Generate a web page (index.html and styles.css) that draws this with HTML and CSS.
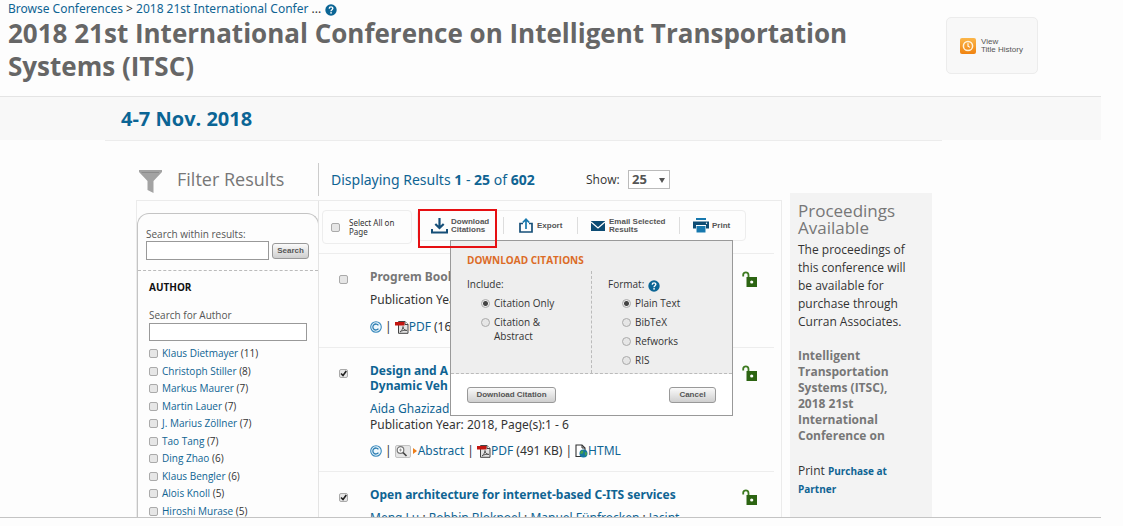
FILE: index.html
```html
<!DOCTYPE html>
<html lang="en">
<head>
<meta charset="utf-8">
<title>2018 21st International Conference on Intelligent Transportation Systems (ITSC)</title>
<link rel="stylesheet" href="styles.css">
</head>
<body>
<svg class="defs" aria-hidden="true">
  <symbol id="help" viewBox="0 0 12 12"><circle cx="6" cy="6" r="5.7" fill="#0b6595"/><path d="M4.2 4.6C4.3 2.2 7.9 2.3 7.8 4.5C7.7 5.7 6.1 5.7 6 7.2" fill="none" stroke="#fff" stroke-width="1.4"/><rect x="5.3" y="8.1" width="1.5" height="1.5" fill="#fff"/></symbol>
  <symbol id="copy" viewBox="0 0 12 12"><circle cx="6" cy="6" r="5.3" fill="#eef7fc" stroke="#3a8abd" stroke-width="1.1"/><path d="M8.4 4.4A3 3 0 1 0 8.4 7.6" fill="none" stroke="#2b7db2" stroke-width="1.3"/></symbol>
  <symbol id="pdf" viewBox="0 0 14 14"><path d="M3.500 1.500H10L13 4.500V13.300H3.500Z" fill="#e4e4e4" stroke="#444"/><path d="M10 1.500V4.500H13" fill="#fff" stroke="#444"/><path d="M5 12C7 10 8 8.500 8 6.500C8 9 9.500 10 12 10.500C9 10 7 10.500 5 12" fill="none" stroke="#555"/><rect y="2" width="9.500" height="3.500" fill="#c3150f"/></symbol>
  <symbol id="glass" viewBox="0 0 16 13"><rect x=".5" y=".5" width="15" height="12" rx="1.500" fill="#e6e6e6" stroke="#c2c2c2"/><circle cx="5.500" cy="5" r="3.300" fill="#fff" stroke="#777" stroke-width="1.200"/><path d="M5.500 3.500V6.500M4 5H7" stroke="#888" stroke-width=".8"/><path d="M8 7.500L11.500 11" stroke="#444" stroke-width="1.700"/></symbol>
  <symbol id="html" viewBox="0 0 13 14"><path d="M1 1H7L10 4V12.500H1Z" fill="#fff" stroke="#333" stroke-width="1.100"/><path d="M7 1V4H10" fill="none" stroke="#333"/><circle cx="8.500" cy="9.500" r="4" fill="#1775a0"/><path d="M6 7C8 5.500 9 7 8 9C7 10 6 10 5 9.500ZM10 8C12 8 12.500 9.500 11 12C10 11 9.500 10 10 8" fill="#48a44c"/></symbol>
  <symbol id="lock" viewBox="0 0 15 16"><path d="M1.200 5.500V3.800C1.200 .6 6.500 .4 6.500 4V6.500" fill="none" stroke="#3d7a20" stroke-width="1.800"/><path d="M4.500 6H15V16H4.500Z" fill="#2c6412"/><circle cx="9.700" cy="11" r="1.600" fill="#fff"/></symbol>
</svg>
<div class="viewport">
  <header class="head">
    <div class="head-text">
      <nav class="crumbs"><a href="#">Browse Conferences</a> &gt; <a href="#">2018 21st International Confer</a> ... <svg class="ic12"><use href="#help"/></svg></nav>
      <h1>2018 21st International Conference on Intelligent Transportation Systems (ITSC)</h1>
    </div>
    <a class="history" href="#">
      <svg viewBox="0 0 16 16"><defs><linearGradient id="or" x2="0" y2="1"><stop stop-color="#fbb64a"/><stop offset="1" stop-color="#f08310"/></linearGradient></defs><rect width="16" height="16" rx="2" fill="url(#or)"/><circle cx="8" cy="8" r="4.600" fill="none" stroke="#fff3dc" stroke-width="1.500"/><path d="M8 5.200V8.200L10 9.400" fill="none" stroke="#fff" stroke-width="1.100"/></svg>
      <span>View<br>Title History</span>
    </a>
  </header>
  <div class="datebar"><p>4-7 Nov. 2018</p></div>

  <div class="layout">
    <main>
      <div class="topline">
        <h2><svg viewBox="0 0 23 23"><path d="M0 0H23V2L14.500 11V23L8.500 20V11L0 2Z" fill="#a3a3a3"/><path d="M2.500 2.500H20" stroke="#8c8c8c"/></svg>Filter Results</h2>
        <div class="showing">
          <p>Displaying Results <b>1</b> - <b>25</b> of <b>602</b></p>
          <label for="show">Show:</label>
          <span class="pick"><select id="show"><option>25</option><option>50</option></select></span>
        </div>
      </div>
      <div class="panel">
        <aside class="filter">
          <form class="within">
            <label for="within">Search within results:</label>
            <div class="row"><input type="text" id="within"><button type="button" class="btn">Search</button></div>
          </form>
          <section class="author">
            <h3>AUTHOR</h3>
            <label for="author">Search for Author</label>
            <input type="text" id="author">
            <ul>
              <li><input type="checkbox" id="a1"><label for="a1"><a href="#">Klaus Dietmayer</a> (11)</label></li>
              <li><input type="checkbox" id="a2"><label for="a2"><a href="#">Christoph Stiller</a> (8)</label></li>
              <li><input type="checkbox" id="a3"><label for="a3"><a href="#">Markus Maurer</a> (7)</label></li>
              <li><input type="checkbox" id="a4"><label for="a4"><a href="#">Martin Lauer</a> (7)</label></li>
              <li><input type="checkbox" id="a5"><label for="a5"><a href="#">J. Marius Zöllner</a> (7)</label></li>
              <li><input type="checkbox" id="a6"><label for="a6"><a href="#">Tao Tang</a> (7)</label></li>
              <li><input type="checkbox" id="a7"><label for="a7"><a href="#">Ding Zhao</a> (6)</label></li>
              <li><input type="checkbox" id="a8"><label for="a8"><a href="#">Klaus Bengler</a> (6)</label></li>
              <li><input type="checkbox" id="a9"><label for="a9"><a href="#">Alois Knoll</a> (5)</label></li>
              <li><input type="checkbox" id="a10"><label for="a10"><a href="#">Hiroshi Murase</a> (5)</label></li>
            </ul>
          </section>
        </aside>

        <section class="results">
          <div class="tools">
            <div class="selectall"><input type="checkbox" id="all"><label for="all">Select All on<br>Page</label></div>
            <div class="actions">
              <button type="button" class="download"><svg viewBox="0 0 17 16"><path d="M8.500 0V9M4.300 6L8.500 10L12.700 6" fill="none" stroke="#164f78" stroke-width="2.200"/><path d="M1 11V14.500H16V11" fill="none" stroke="#164f78" stroke-width="2"/></svg><span>Download<br>Citations</span></button>
              <button type="button" class="export"><svg viewBox="0 0 14 15"><path d="M4 5.500H1V14H13V5.500H10" fill="none" stroke="#164f78" stroke-width="1.700"/><path d="M7 11V2M3.800 4.500L7 1.300L10.200 4.500" fill="none" stroke="#1778ae" stroke-width="1.700"/></svg><span>Export</span></button>
              <button type="button" class="email"><svg viewBox="0 0 14 10"><path d="M0 0H14V10H0Z" fill="#0d4c74"/><path d="M0 1L7 7L14 1" fill="none" stroke="#fff" stroke-width="1.300"/></svg><span>Email Selected<br>Results</span></button>
              <button type="button" class="print"><svg viewBox="0 0 16 15"><path d="M3 0H13V2H3Z" fill="#1778ae"/><path d="M0 3.500H16V10.500H0Z" fill="#0d4c74"/><path d="M3 7H13V15H3Z" fill="#fff"/><path d="M3.500 8H12.500V14.500H3.500Z" fill="#1778ae"/><circle cx="13.500" cy="5.300" r=".7" fill="#fff"/></svg><span>Print</span></button>
            </div>
            <form class="popup">
              <div class="options">
                <h3>DOWNLOAD CITATIONS</h3>
                <fieldset class="include">
                  <legend>Include:</legend>
                  <div><input type="radio" name="inc" id="i1" checked><label for="i1">Citation Only</label></div>
                  <div><input type="radio" name="inc" id="i2"><label for="i2">Citation &amp;<br>Abstract</label></div>
                </fieldset>
                <fieldset class="format">
                  <legend>Format: <svg class="ic12"><use href="#help"/></svg></legend>
                  <div><input type="radio" name="fmt" id="f1" checked><label for="f1">Plain Text</label></div>
                  <div><input type="radio" name="fmt" id="f2"><label for="f2">BibTeX</label></div>
                  <div><input type="radio" name="fmt" id="f3"><label for="f3">Refworks</label></div>
                  <div><input type="radio" name="fmt" id="f4"><label for="f4">RIS</label></div>
                </fieldset>
              </div>
              <div class="buttons"><button type="button" class="btn wide">Download Citation</button><button type="button" class="btn cancel">Cancel</button></div>
            </form>
            <div class="marker"></div>
          </div>

          <article>
            <input type="checkbox" aria-label="Select Progrem Book">
            <div>
              <h4 class="plain">Progrem Book</h4>
              <p class="single">Publication Year: 2018</p>
              <p class="links"><svg class="ic12"><use href="#copy"/></svg><i>|</i><svg class="ic14"><use href="#pdf"/></svg><a href="#">PDF</a>&nbsp;(16</p>
            </div>
            <svg class="lock"><use href="#lock"/></svg>
          </article>
          <article>
            <input type="checkbox" checked aria-label="Select Design and A">
            <div>
              <h4><a href="#">Design and A<br>Dynamic Veh</a></h4>
              <p class="meta"><a href="#">Aida Ghazizad</a><br>Publication Year: 2018, Page(s):1 - 6</p>
              <p class="links"><svg class="ic12"><use href="#copy"/></svg><i>|</i><svg class="ic16"><use href="#glass"/></svg><b class="arrow"></b><a href="#">Abstract</a><i>|</i><svg class="ic14"><use href="#pdf"/></svg><a href="#">PDF</a>&nbsp;(491 KB)<i>|</i><svg class="ic13"><use href="#html"/></svg><a href="#">HTML</a></p>
            </div>
            <svg class="lock"><use href="#lock"/></svg>
          </article>
          <article>
            <input type="checkbox" checked aria-label="Select Open architecture for internet-based C-ITS services">
            <div>
              <h4><a href="#">Open architecture for internet-based C-ITS services</a></h4>
              <p class="meta"><a href="#">Meng Lu</a> ; <a href="#">Robbin Blokpoel</a> ; <a href="#">Manuel Fünfrocken</a> ; <a href="#">Jacint</a></p>
            </div>
            <svg class="lock"><use href="#lock"/></svg>
          </article>
        </section>
      </div>
    </main>
    <aside class="proceedings">
      <h2>Proceedings Available</h2>
      <p>The proceedings of this conference will be available for purchase through Curran Associates.</p>
      <h3>Intelligent Transportation Systems (ITSC), 2018 21st International Conference on</h3>
      <p>Print <a href="#">Purchase at Partner</a></p>
    </aside>
  </div>
</div>
</body>
</html>
```
FILE: styles.css
```css
* { box-sizing: border-box; }
body { margin: 0; background: #fdfdfd; color: #333; font: 12px/16px "Open Sans", "Noto Sans", sans-serif; overflow: hidden; }
h1, h2, h3, h4, p, ul, fieldset { margin: 0; padding: 0; border: 0; }
ul { list-style: none; }
a { color: #0f6493; text-decoration: none; }
.defs { position: absolute; width: 0; height: 0; }
svg { flex: none; }
.ic12 { width: 12px; height: 12px; }
.ic13 { width: 13px; height: 14px; }
.ic14 { width: 14px; height: 14px; }
.ic16 { width: 16px; height: 13px; }
.viewport { display: flex; flex-direction: column; height: calc(100vh - 8px); margin-right: 22px; overflow: hidden; border-bottom: 1px solid #c4c4c4; }

.head { display: flex; justify-content: space-between; align-items: flex-start; flex: none; height: 96px; padding: 0 63px 0 8px; }
.head-text { flex: 1; max-width: 860px; }
.crumbs { line-height: 17px; font-family: "Noto Sans", sans-serif; }
.crumbs svg { margin-left: 1px; vertical-align: -3px; }
h1 { color: #666; font-size: 26px; line-height: 33px; }
.history { display: flex; align-items: center; gap: 5px; width: 92px; height: 57px; margin-top: 17px; padding-left: 13px; border: 1px solid #ececec; border-radius: 5px; background: #f8f8f8; color: #555; font: 8px/8px "Liberation Sans", sans-serif; white-space: nowrap; }
.history svg { width: 16px; height: 16px; }
.datebar { flex: none; height: 44px; padding-left: 121px; border-top: 1px solid #e4e4e4; background: #f8f8f8; color: #0b6595; font-size: 20px; font-weight: bold; line-height: 44px; }

.layout { display: grid; grid-template-columns: minmax(0, 1fr) 142px; column-gap: 8px; flex: 1; min-height: 0; margin: 0 159px 0 105px; padding: 0 10px 0 32px; border-top: 1px solid #ececec; }
main { display: flex; flex-direction: column; padding-top: 22px; }
.topline { display: flex; height: 37px; flex: none; }
.topline h2 { display: flex; align-items: center; gap: 15px; width: 181px; height: 32px; padding-left: 2px; color: #777; font-size: 18px; font-weight: normal; }
.topline h2 svg { width: 23px; height: 23px; margin-top: 5px; }
.showing { display: flex; align-items: center; height: 33px; padding-left: 12px; border-left: 1px solid #ccc; }
.showing p { width: 255px; color: #0f6493; font-family: "Noto Sans", sans-serif; font-size: 14px; }
.showing label { width: 42px; font-size: 12px; }
.pick { display: flex; position: relative; }
.pick::after { content: ""; position: absolute; right: 5px; top: 8px; border: 3px solid transparent; border-top: 5px solid #555; border-bottom: 0; pointer-events: none; }
.pick select { width: 42px; height: 19px; padding: 0 3px; border: 1px solid #bbb; background: #fff; color: #555; font: bold 13px/17px "Open Sans", sans-serif; appearance: none; }

.panel { display: flex; flex: 1; border: 1px solid #ebebeb; border-bottom: 0; min-height: 0; margin-left: -1px; }
.filter { flex: none; width: 182px; margin-top: 12px; border: 1px solid #c4c4c4; border-width: 1px 1px 0; border-radius: 12px 12px 0 0; color: #555; font-size: 10px; }
input[type=text] { display: block; height: 18px; border: 1px solid #999; background: #fff; padding: 0 2px; font: inherit; }
.within { padding: 12px 9px 10px 8px; border-bottom: 1px dashed #bbb; }
.within label { display: block; height: 15px; }
.within .row { display: flex; gap: 3px; align-items: center; }
.within .row input { flex: 1; min-width: 0; height: 19px; }
.btn { width: 37px; height: 16px; padding: 0; border: 1px solid #999; border-radius: 3px; background: linear-gradient(#fafafa, #cfcfcf); color: #555; font: bold 8px "Liberation Sans", sans-serif; }
.author { padding: 8px 11px 0; }
.author h3 { color: #111; font-size: 10px; line-height: 16px; margin-bottom: 12px; }
.author > input { width: 100%; margin-bottom: 4px; }
.author li { display: flex; gap: 4px; line-height: 1.75; }
.author li label { color: #333; }
input[type=checkbox], input[type=radio] { appearance: none; flex: none; width: 9px; height: 9px; margin: 0; border: 1px solid #aaa; border-radius: 2px; background: #e6e6e6; }
input[type=radio] { border-radius: 50%; }
input[type=radio]:checked { background: radial-gradient(#444 0 2px, #eee 3px); }
input[type=checkbox]:checked { background: #e6e6e6 url("data:image/svg+xml,%3Csvg xmlns='http://www.w3.org/2000/svg' viewBox='0 0 7 7'%3E%3Cpath d='M1 3.500L3 5.500L6.300 1' fill='none' stroke='%23222' stroke-width='1.600'/%3E%3C/svg%3E"); }
.author li input[type=checkbox] { margin-top: 4px; }

.results { flex: 1; min-width: 0; border-left: 1px solid #e4e4e4; margin-left: -1px; }
.tools { position: relative; display: flex; gap: 5px; align-items: flex-start; height: 53px; margin-right: 7px; padding: 9px 0 0 3px; border-bottom: 1px solid #ededed; }
.selectall { display: flex; align-items: center; gap: 9px; width: 90px; height: 34px; padding-left: 8px; border: 1px solid #ededed; border-radius: 4px; font: 8px/9px "Noto Sans", sans-serif; white-space: nowrap; }
.actions { display: flex; align-items: center; width: 329px; height: 31px; border: 1px solid #ededed; border-radius: 4px; }
.actions button { display: flex; align-items: center; height: 17px; padding: 0; border: 0; border-left: 1px solid #ddd; background: none; color: #555; font: bold 8px/8px "Liberation Sans", sans-serif; text-align: left; white-space: nowrap; }
.actions .download { width: 85px; padding-left: 13px; gap: 3px; border: 0; }
.download svg { width: 17px; height: 16px; }
.actions .export { width: 74px; padding-left: 15px; gap: 4px; }
.export svg { width: 14px; height: 15px; }
.actions .email { width: 102px; padding-left: 13px; gap: 4px; }
.email svg { width: 14px; height: 10px; }
.actions .print { padding-left: 13px; gap: 3px; }
.print svg { width: 16px; height: 15px; }
.marker { position: absolute; left: 99px; top: 8px; width: 79px; height: 39px; border: 2px solid #e60f12; pointer-events: none; }

.popup { position: absolute; left: 131px; top: 39px; width: 283px; border: 1px solid #999; background: #fff; font-size: 10px; line-height: 14px; }
.options { display: grid; grid-template-columns: 140px 1fr; background: #eee; border-bottom: 1px dashed #bbb; }
.options h3 { grid-column: 1 / -1; padding: 12px 0 4px 16px; color: #dc6b26; font-size: 10px; line-height: 14px; }
.options fieldset { min-width: 0; padding: 6px 0 6px 16px; }
.options .format { border-left: 1px dashed #bbb; }
.options legend { float: left; width: 100%; height: 14px; padding: 0; margin-bottom: 5px; }
.options legend svg { margin-left: 1px; vertical-align: -4px; }
.options fieldset div { clear: both; display: flex; gap: 4px; padding-left: 14px; margin-bottom: 5px; }
.options fieldset div:last-child { margin-bottom: 0; }
.options fieldset input[type=radio] { margin-top: 3px; }
.buttons { display: flex; justify-content: space-between; align-items: center; height: 41px; padding: 0 16px; }
.btn.wide { width: 89px; }
.btn.cancel { width: 47px; }

article { display: flex; align-items: flex-start; margin-right: 7px; padding: 15px 17px 12px 20px; border-bottom: 1px solid #ededed; }
article > input[type=checkbox] { margin: 6px 22px 0 0; }
article > div { flex: 1; min-width: 0; font-family: "Noto Sans", sans-serif; font-size: 12px; }
article h4 { font-size: 12px; line-height: 15px; }
article h4.plain { color: #777; }
article .single { margin-top: 7px; line-height: 18px; }
article .meta { margin-top: 8px; }
article .links { display: flex; align-items: center; height: 16px; margin-top: 10px; white-space: nowrap; }
.links i { font-style: normal; margin: 0 3px; }
.arrow { border: 3px solid transparent; border-left: 4px solid #ee7d17; border-right: 0; margin: 0 1px 0 2px; }
.lock { width: 15px; height: 16px; margin-top: 2px; }

.proceedings { margin-top: 52px; padding: 9px 20px 8px 8px; background: #f3f3f3; }
.proceedings h2 { color: #777; font-size: 17px; font-weight: normal; line-height: 17px; margin-bottom: 5px; }
.proceedings p { font-size: 12px; line-height: 18px; }
.proceedings h3 { margin: 17px 0 18px; color: #777; font-size: 12px; line-height: 16px; }
.proceedings p a { font-size: 10px; font-weight: bold; }
```
